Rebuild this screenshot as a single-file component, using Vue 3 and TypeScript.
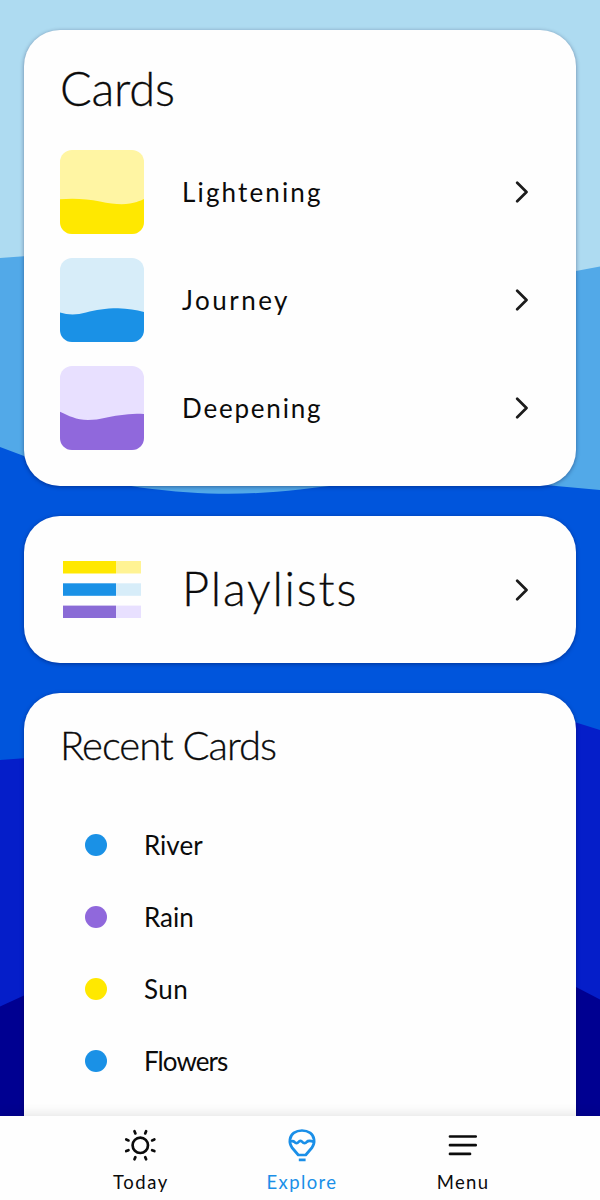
<script setup lang="ts">
interface Deck {
  name: string
  top: string
  fill: string
  wave: string
}

interface Recent {
  name: string
  color: string
}

const decks: Deck[] = [
  { name: 'Lightening', top: '#fff5a3', fill: '#ffe800', wave: 'M0 49.3C14 48 27 49 40 51.5C52 54 62 55 70 53.5C77 52.3 81 50.5 84 49V84H0Z' },
  { name: 'Journey', top: '#d7edf9', fill: '#1a91e6', wave: 'M0 54.5C8 57 17 57 26 54.5C36 52 45 50.3 58 50.3C68 50.5 76 52 84 54V84H0Z' },
  { name: 'Deepening', top: '#e8e0ff', fill: '#9068dc', wave: 'M0 45.8C9 50 16 53.8 28 54C41 54 48 50.5 60 49.3C68 47.8 76 47.3 84 48V84H0Z' },
]

const bars = [
  { y: 0, fill: '#ffe800', rest: '#fff394' },
  { y: 22.3, fill: '#1a91e6', rest: '#d7edf9' },
  { y: 44.6, fill: '#8a6bd6', rest: '#e8e0ff' },
]

const recents: Recent[] = [
  { name: 'River', color: '#1a91e6' },
  { name: 'Rain', color: '#9068dc' },
  { name: 'Sun', color: '#ffe800' },
  { name: 'Flowers', color: '#1a91e6' },
]

const rays = [22.5, 67.5, 112.5, 157.5, 202.5, 247.5, 292.5, 337.5]
</script>

<template>
  <div class="screen">
    <svg class="sea" viewBox="0 0 600 1200" aria-hidden="true">
      <path fill="#52a9e8" d="M0 258L24 256.3C210 240 400 310 576 271L600 266.5V1200H0Z" />
      <path fill="#0055dc" d="M0 447L24 456C70 472 110 483 140 487.5C205 496 250 495 300 489.5C350 483 390 480 440 480C490 480 530 483 556 486L600 490V1200H0Z" />
      <path fill="#051ec9" d="M0 760L24 758.3C220 748 390 655 576 722.5L600 730V1200H0Z" />
      <path fill="#000091" d="M0 1006.500L24 995.500C210 900 390 890 576 987L600 999.500V1200H0Z" />
    </svg>

    <main class="content">
      <section class="card">
        <h1 class="title">Cards</h1>
        <ul class="decks">
          <li v-for="deck in decks" :key="deck.name" class="row">
            <svg class="thumb" viewBox="0 0 84 84">
              <rect width="84" height="84" :fill="deck.top" />
              <path :d="deck.wave" :fill="deck.fill" />
            </svg>
            <span class="deck-name" :class="deck.name.toLowerCase()">{{ deck.name }}</span>
            <svg class="chevron" viewBox="0 0 14 22"><path d="M2.200 1.700L11.500 11L2.200 20.300" /></svg>
          </li>
        </ul>
      </section>

      <section class="card playlists">
        <div class="row">
          <svg class="bars" viewBox="0 0 84 57.500">
            <g v-for="bar in bars" :key="bar.y">
              <rect x="3" :y="bar.y" width="53" height="12.500" :fill="bar.fill" />
              <rect x="56" :y="bar.y" width="25" height="12.500" :fill="bar.rest" />
            </g>
          </svg>
          <span class="playlists-name">Playlists</span>
          <svg class="chevron" viewBox="0 0 14 22"><path d="M2.200 1.700L11.500 11L2.200 20.300" /></svg>
        </div>
      </section>

      <section class="card recent">
        <h2 class="subtitle">Recent Cards</h2>
        <ul class="recents">
          <li v-for="item in recents" :key="item.name" class="recent-row">
            <span class="dot" :style="{ background: item.color }"></span>
            <span class="recent-name" :class="item.name.toLowerCase()">{{ item.name }}</span>
          </li>
        </ul>
      </section>
    </main>

    <nav class="tabs">
      <a class="tab today">
        <svg class="icon" viewBox="0 0 36 36">
          <circle cx="17.300" cy="17.300" r="7.700" />
          <path v-for="r in rays" :key="r" d="M17.300 4.500V2.100" :transform="`rotate(${r} 17.300 17.300)`" />
        </svg>
        <span>Today</span>
      </a>
      <a class="tab explore">
        <svg class="icon" viewBox="0 0 36 36">
          <path d="M14.300 27L7.900 19.500C4.500 14.500 5.500 8 9.800 4.900C14.500 1.700 21.500 1.700 26.200 4.900C30.500 8 31.500 14.500 28.100 19.500L21.700 27Z" />
          <path d="M6.500 13.300C8.300 12.800 9.500 12.900 10.500 14C11.700 15.500 13.400 15.500 14.500 14C15.600 12.600 17.300 12.600 18.400 14C19.600 15.600 21.500 15.600 22.700 14C24 12.600 26.500 12.700 29.500 13.600" />
          <path class="basket" d="M14.800 31.900H21.600" />
        </svg>
        <span>Explore</span>
      </a>
      <a class="tab menu">
        <svg class="icon" viewBox="0 0 36 36"><path d="M5 8.500H30.700M5 17.200H30.700M5 25.900H25" /></svg>
        <span>Menu</span>
      </a>
    </nav>
  </div>
</template>

<style>
body {
  margin: 0;
}
</style>

<style scoped>
.screen {
  position: relative;
  height: 1200px;
  overflow: hidden;
  background: #aedbf1;
  color: #0b0b0b;
  font-family: Lato, "Open Sans", sans-serif;
  display: flex;
  flex-direction: column;
}

.sea {
  position: absolute;
  inset: 0;
  width: 600px;
  height: 1200px;
}

.content {
  position: relative;
  flex: 1;
  min-height: 0;
  overflow: hidden;
  padding: 30px 24px 0;
  display: flex;
  flex-direction: column;
  gap: 30px;
}

.card {
  box-sizing: border-box;
  flex: none;
  padding: 36px;
  border-radius: 36px;
  background: #fefefe;
  box-shadow: 0 1px 4px rgba(0, 0, 50, 0.4);
}

.title,
.subtitle {
  margin: 0;
  font-weight: 300;
  white-space: nowrap;
  -webkit-text-stroke: 0.3px currentColor;
}

.title {
  padding-top: 1px;
  font-size: 47px;
  line-height: 42px;
  letter-spacing: -0.2px;
}

.subtitle {
  padding-top: 2px;
  font-size: 40px;
  line-height: 29px;
  letter-spacing: -1px;
}

.decks,
.recents {
  list-style: none;
  padding: 0;
  margin: 0;
}

.decks {
  margin-top: 41px;
  display: flex;
  flex-direction: column;
  gap: 24px;
}

.row {
  display: flex;
  align-items: center;
}

.thumb {
  width: 84px;
  height: 84px;
  border-radius: 12px;
}

.deck-name {
  flex: 1;
  margin-left: 38px;
  font-size: 26px;
  letter-spacing: 2.15px;
}

.journey {
  letter-spacing: 2.5px;
}

.deepening {
  letter-spacing: 1.8px;
}

.chevron {
  width: 14px;
  height: 22px;
  margin-right: 11px;
  fill: none;
  stroke: #1c1c1c;
  stroke-width: 2.7;
  stroke-linecap: round;
  stroke-linejoin: round;
}

.playlists {
  height: 147px;
  display: grid;
  align-items: center;
}

.bars {
  width: 84px;
  height: 57.5px;
}

.playlists-name {
  flex: 1;
  margin-left: 38px;
  padding-bottom: 3px;
  font-size: 47px;
  font-weight: 300;
  line-height: 56px;
  letter-spacing: 1.8px;
  -webkit-text-stroke: 0.3px currentColor;
}

.recent {
  height: 540px;
}

.recents {
  margin-top: 48.6px;
}

.recent-row {
  height: 72px;
  display: flex;
  align-items: center;
}

.dot {
  width: 22px;
  height: 22px;
  margin-left: 25px;
  border-radius: 50%;
}

.recent-name {
  margin-left: 37px;
  font-size: 26px;
}

.sun {
  letter-spacing: 0.4px;
}

.flowers {
  letter-spacing: -0.9px;
}

.tabs {
  position: relative;
  flex: none;
  box-sizing: border-box;
  height: 84px;
  padding: 0 57px 0 60px;
  display: grid;
  grid-template-columns: repeat(3, 161px);
  background: #fefefe;
  box-shadow: 0 -1px 12px rgba(0, 0, 0, 0.12);
}

.tab {
  padding-top: 12px;
  display: flex;
  flex-direction: column;
  align-items: center;
  font-size: 18.5px;
  line-height: 24px;
  letter-spacing: 1.6px;
}

.tab span {
  margin-top: 6px;
  margin-right: -1px;
}

.explore {
  color: #1a8fe8;
  letter-spacing: 1.4px;
}

.menu {
  letter-spacing: 1.3px;
}

.icon {
  width: 36px;
  height: 36px;
  fill: none;
  stroke: currentColor;
  stroke-width: 2.7;
  stroke-linecap: round;
  stroke-linejoin: round;
}

.basket {
  stroke-linecap: butt;
}
</style>
